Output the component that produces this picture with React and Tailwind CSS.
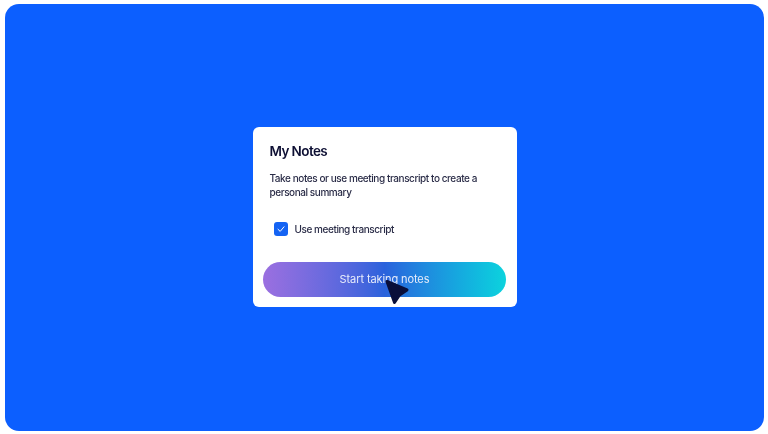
import React from 'react';

export default function App() {
  return (
    <div className="w-[768px] h-[434px] bg-white pt-[4px] pl-[5px] pr-[4px] pb-[3px] font-['Inter',sans-serif]">
      <div className="h-full bg-[#0c5fff] rounded-[14px] flex items-center justify-center">
        {/* Card */}
        <div className="relative mb-[1px] w-[264px] h-[180px] bg-white rounded-[6px] pt-[15px] px-[17px] blur-[0.5px]">
          <h1 className="text-[13.5px] leading-[18px] font-semibold tracking-[-0.6px] text-[#0d0f33]">My Notes</h1>
          <p className="mt-[11px] w-[215px] text-[10px] leading-[14px] font-[450] tracking-[-0.43px] text-[#2a2c47]">
            Take notes or use meeting transcript to create a personal summary
          </p>

          <label className="mt-[22.5px] ml-[4px] flex items-center gap-[7px]">
            <span className="w-[14px] h-[14px] rounded-[3px] bg-[#1463f3] flex items-center justify-center">
              <svg width="10" height="10" viewBox="0 0 10 10" fill="none">
                <path d="M2 5.3 L4.2 7.4 L8 2.8" stroke="white" strokeWidth="1" strokeLinecap="round" strokeLinejoin="round" />
              </svg>
            </span>
            <span className="text-[10px] leading-[14px] font-[450] tracking-[-0.43px] text-[#2a2c47]">Use meeting transcript</span>
          </label>

          {/* Button */}
          <button className="absolute left-[10.5px] bottom-[10px] w-[243px] h-[35px] rounded-full bg-gradient-to-r from-[#9b6fe0] via-[#2a62dc] to-[#0dd3dd] text-[11px] tracking-[-0.1px] text-[#e6ebfb]">
            Start taking notes
          </button>

          {/* Cursor */}
          <svg className="absolute left-[130px] top-[150px]" width="30" height="30" viewBox="0 0 30 30">
            <path d="M4 4.5 L24 13 L16.5 18 L11.5 25.5 Z" fill="#090e3a" stroke="#090e3a" strokeWidth="3" strokeLinejoin="round" />
          </svg>
        </div>
      </div>
    </div>
  );
}
